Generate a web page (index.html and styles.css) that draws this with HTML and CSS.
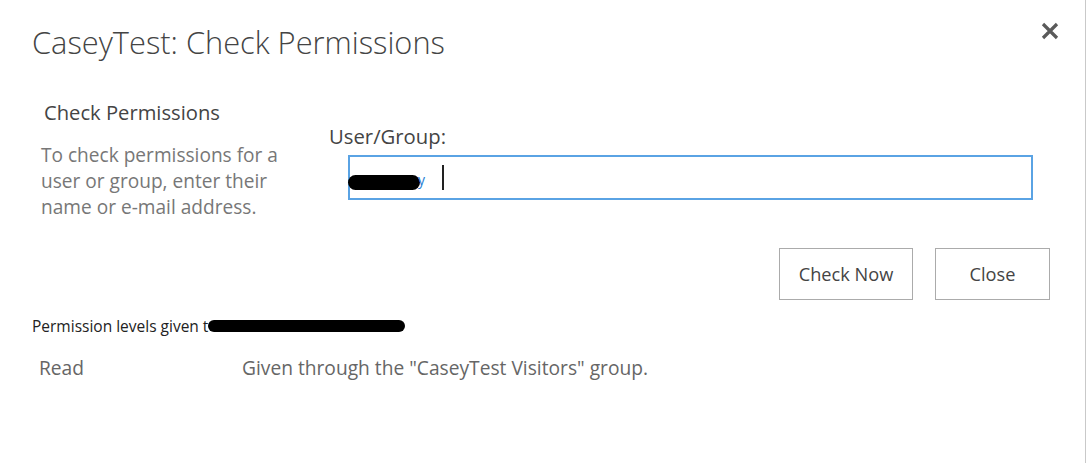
FILE: index.html
```html
<!DOCTYPE html>
<html>
<head>
<meta charset="utf-8">
<link rel="stylesheet" href="styles.css">
</head>
<body>
<div class="dialog">
  <header class="head">
    <h1 class="title">CaseyTest: Check Permissions</h1>
    <button class="x" aria-label="Close">
      <svg width="18" height="18" viewBox="0 0 18 18"><path d="M2 2 L16 16 M16 2 L2 16" stroke="#5a5a5a" stroke-width="3.2" stroke-linecap="butt"/></svg>
    </button>
  </header>
  <section class="form">
    <div class="desc">
      <h2 class="sub">Check Permissions</h2>
      <p class="help">To check permissions for a user or group, enter their name or e-mail address.</p>
    </div>
    <div class="field">
      <label class="lbl">User/Group:</label>
      <div class="input"><span class="redact r1"></span><span class="tail">y</span><span class="caret"></span></div>
    </div>
  </section>
  <div class="actions">
    <button class="btn btn-check">Check Now</button>
    <button class="btn btn-close">Close</button>
  </div>
  <section class="results">
    <p class="given">Permission levels given t<span class="redact r2"></span></p>
    <div class="row">
      <span class="lvl">Read</span>
      <span class="how">Given through the "CaseyTest Visitors" group.</span>
    </div>
  </section>
</div>
</body>
</html>
```
FILE: styles.css
```css
html, body {
  margin: 0;
  padding: 0;
  background: #fff;
}
body {
  font-family: "Open Sans", "Noto Sans", sans-serif;
  color: #444;
}
.dialog {
  width: 1085px;
  height: 463px;
  border-right: 1px solid #c9c9c9;
  box-sizing: content-box;
}
.head {
  display: flex;
  justify-content: space-between;
  align-items: flex-start;
  padding: 22px 26px 0 32px;
}
.title {
  margin: 0;
  font-weight: 300;
  font-size: 30.8px;
  line-height: 40px;
  color: #444;
}
.x {
  border: 0;
  background: none;
  padding: 0;
  margin-top: 0;
  width: 18px;
  height: 18px;
}
.x svg { display: block; }
.form {
  display: flex;
  padding-top: 37px;
}
.desc {
  width: 288px;
  padding-left: 41px;
}
.sub {
  margin: 0 0 17px 3px;
  font-weight: 400;
  font-size: 20.2px;
  line-height: 26px;
  color: #444;
}
.help {
  margin: 0;
  font-size: 19.1px;
  line-height: 26px;
  color: #777;
  width: 262px;
}
.field {
  flex: 1;
  padding-top: 24px;
}
.lbl {
  display: block;
  font-size: 20.3px;
  line-height: 26px;
  color: #444;
}
.input {
  margin: 6px 0 0 19px;
  width: 681px;
  height: 41px;
  border: 2px solid #5aa3e4;
  display: flex;
  align-items: center;
}
.redact {
  display: inline-block;
  background: #000;
  border-radius: 8px;
}
.r1 {
  width: 72px;
  height: 15px;
  margin: 9px 0 0 -2px;
}
.tail {
  color: #2a7fd4;
  font-size: 14px;
  margin: 4px 0 0 -2px;
}
.caret {
  width: 2px;
  height: 25px;
  background: #222;
  margin-left: 17px;
}
.actions {
  display: flex;
  justify-content: flex-end;
  gap: 22px;
  padding: 28px 35px 0 0;
}
.btn {
  font-family: "Open Sans", "Noto Sans", sans-serif;
  font-size: 18.2px;
  color: #444;
  background: #fff;
  border: 1px solid #ababab;
  height: 52px;
  padding: 0;
}
.btn-check { width: 134px; }
.btn-close { width: 115px; }
.results {
  padding: 16px 0 0 32px;
}
.given {
  margin: 0;
  font-size: 15.5px;
  line-height: 20px;
  color: #222;
  display: flex;
  align-items: center;
}
.r2 {
  width: 197px;
  height: 12px;
  margin-left: 0;
  border-radius: 6px;
}
.row {
  display: flex;
  padding: 19px 0 0 7px;
  font-size: 19.2px;
  line-height: 26px;
  color: #666;
}
.lvl { width: 203px; }
```
